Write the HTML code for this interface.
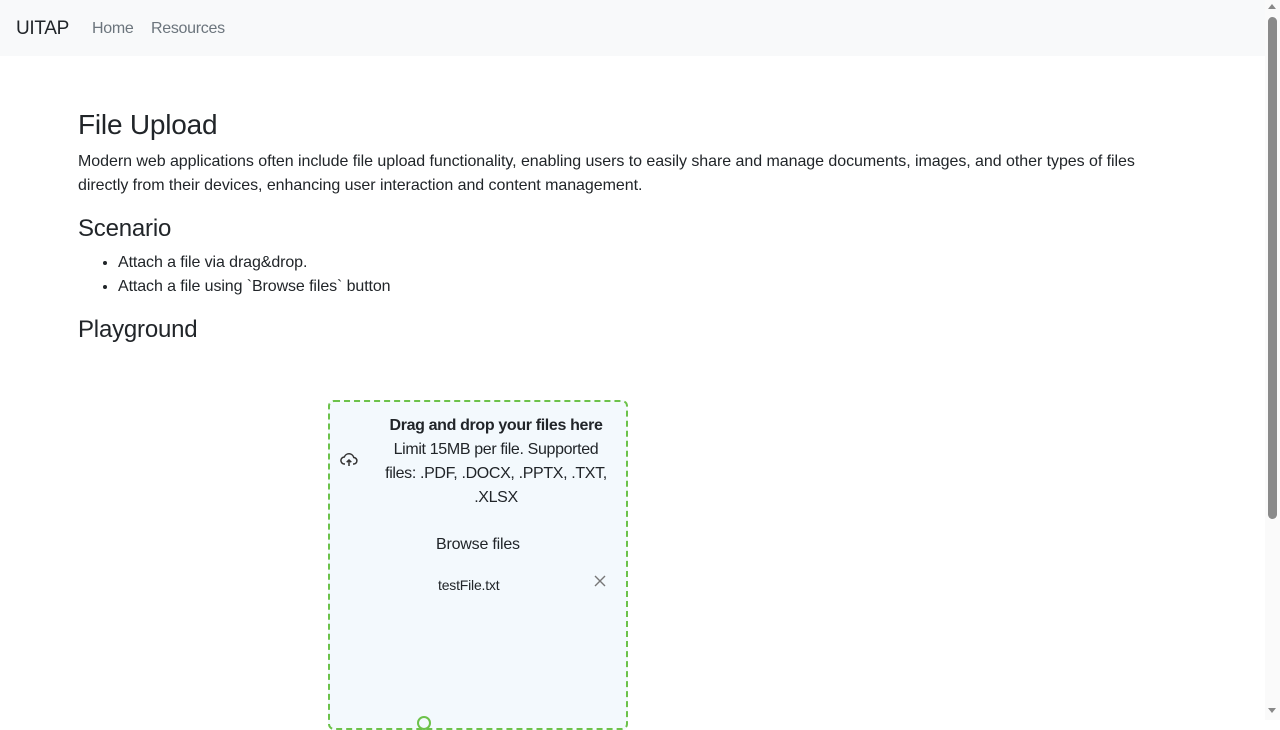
<!DOCTYPE html>
<html><head><meta charset="utf-8"><style>
*{box-sizing:border-box}
body{margin:0;width:1280px;height:720px;overflow:hidden;font-family:"Liberation Sans",sans-serif;color:#212529;background:#fff;position:relative}
.nav{position:absolute;left:0;top:0;width:1265px;height:56px;background:#f8f9fa}
.brand{position:absolute;left:16px;top:18px;font-size:19px;color:#212529;letter-spacing:-0.3px}
.nl{position:absolute;top:20px;font-size:16px;color:#6c757d;letter-spacing:-0.3px}
h1{position:absolute;left:78px;top:109px;margin:0;font-size:28px;font-weight:500;letter-spacing:-0.2px}
h2{position:absolute;left:78px;margin:0;font-size:24px;font-weight:500;letter-spacing:-0.2px}
p{position:absolute;left:78px;top:150px;margin:0;width:1100px;font-size:16px;line-height:24px;letter-spacing:-0.05px}
ul{position:absolute;left:78px;top:251px;margin:0;padding-left:40px;font-size:16px;line-height:24px;letter-spacing:-0.1px}
.box{position:absolute;left:328px;top:400px;width:300px;height:330px;border:2px dashed #6cc24a;border-radius:6px;background:#f3f9fd}
.t{position:absolute;left:50px;width:232px;text-align:center;font-size:16px;line-height:24px;letter-spacing:-0.35px}
.sb{position:absolute;right:0;top:0;width:15px;height:720px;background:#fafafa}
.th{position:absolute;left:3px;top:17px;width:9px;height:502px;background:#8a8a8a;border-radius:5px}
</style></head><body>
<div class="nav"><span class="brand">UITAP</span><span class="nl" style="left:92px">Home</span><span class="nl" style="left:151px">Resources</span></div>
<h1>File Upload</h1>
<p>Modern web applications often include file upload functionality, enabling users to easily share and manage documents, images, and other types of files directly from their devices, enhancing user interaction and content management.</p>
<h2 style="top:215px">Scenario</h2>
<ul><li>Attach a file via drag&amp;drop.</li><li>Attach a file using `Browse files` button</li></ul>
<h2 style="top:316px">Playground</h2>
<div class="box">
<svg style="position:absolute;left:10px;top:50px" width="18" height="16" viewBox="0 0 18 16" fill="none" stroke="#333" stroke-width="1.5"><path d="M5 12H4.5A3.5 3.5 0 0 1 4.3 5 5 5 0 0 1 13.8 5.5 3.2 3.2 0 0 1 13.5 12H13"/><path d="M9 14V8M6.7 10.2 9 8l2.3 2.2"/></svg>
<div class="t" style="top:12px;font-weight:bold">Drag and drop your files here</div>
<div class="t" style="top:36px">Limit 15MB per file. Supported files: .PDF, .DOCX, .PPTX, .TXT, .XLSX</div>
<div style="position:absolute;left:106px;top:134px;font-size:16px;letter-spacing:-0.2px">Browse files</div>
<div style="position:absolute;left:108px;top:175px;font-size:14px;letter-spacing:-0.2px">testFile.txt</div>
<svg style="position:absolute;left:264px;top:173px" width="12" height="12" viewBox="0 0 12 12" stroke="#777" stroke-width="1.4"><path d="M1 1l10 10M11 1 1 11"/></svg>
<div style="position:absolute;left:87px;top:314px;width:14px;height:14px;border:2px solid #6cc24a;border-radius:50%"></div>
</div>
<div class="sb"><div style="position:absolute;left:3px;top:4px;border-left:4.5px solid transparent;border-right:4.5px solid transparent;border-bottom:5px solid #888"></div><div class="th"></div><div style="position:absolute;left:3px;top:708px;border-left:4.5px solid transparent;border-right:4.5px solid transparent;border-top:5px solid #888"></div></div>
</body></html>
